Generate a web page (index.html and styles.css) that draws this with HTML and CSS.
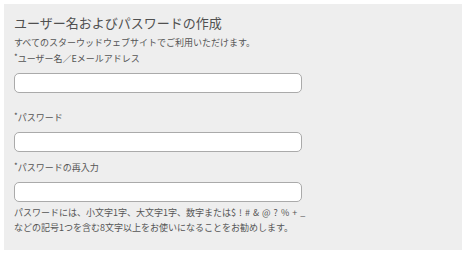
FILE: index.html
```html
<!DOCTYPE html>
<html lang="ja">
<head>
<meta charset="utf-8">
<link rel="stylesheet" href="styles.css">
</head>
<body>
<div class="panel">
  <h1 class="title">ユーザー名およびパスワードの作成</h1>
  <p class="sub">すべてのスターウッドウェブサイトでご利用いただけます。</p>
  <div class="field first">
    <label class="label"><span class="req">*</span>ユーザー名／Eメールアドレス</label>
    <input class="input" type="text">
  </div>
  <div class="field">
    <label class="label"><span class="req">*</span>パスワード</label>
    <input class="input" type="password">
  </div>
  <div class="field last">
    <label class="label"><span class="req">*</span>パスワードの再入力</label>
    <input class="input" type="password">
  </div>
  <p class="help">パスワードには、小文字1字、大文字1字、数字または<span class="symbols">$ ! # &amp; @ ? % + _</span><br>などの記号1つを含む8文字以上をお使いになることをお勧めします。</p>
</div>
</body>
</html>
```

FILE: styles.css
```css
html, body {
  margin: 0;
  padding: 0;
  background: #ffffff;
}
body {
  font-family: "Noto Sans CJK JP", "Noto Sans", sans-serif;
  color: #555555;
}
.panel {
  margin: 4px;
  width: 458px;
  height: 246px;
  box-sizing: border-box;
  background: #eeeeee;
  padding: 11px 10px 0 10px;
}
.title {
  margin: 0;
  font-size: 13px;
  line-height: 16px;
  font-weight: normal;
  color: #505050;
}
.sub {
  margin: 6px 0 0 0;
  font-size: 9px;
  line-height: 12px;
}
.field {
  display: flex;
  flex-direction: column;
  margin-top: 19px;
}
.field.first {
  margin-top: 4px;
}
.field.last {
  margin-top: 10px;
}
.label {
  font-size: 9px;
  line-height: 12px;
}
.req {
  font-size: 8px;
  line-height: 8px;
  vertical-align: 2px;
  color: #444444;
}
.input {
  margin: 8px 0 0 0;
  width: 288px;
  height: 20px;
  box-sizing: border-box;
  border: 1px solid #aaaaaa;
  border-radius: 5px;
  background: #ffffff;
  padding: 0 6px;
}
.help {
  margin: 3px 0 0 0;
  font-size: 9px;
  line-height: 15px;
}
.symbols {
  word-spacing: 1px;
}
```
